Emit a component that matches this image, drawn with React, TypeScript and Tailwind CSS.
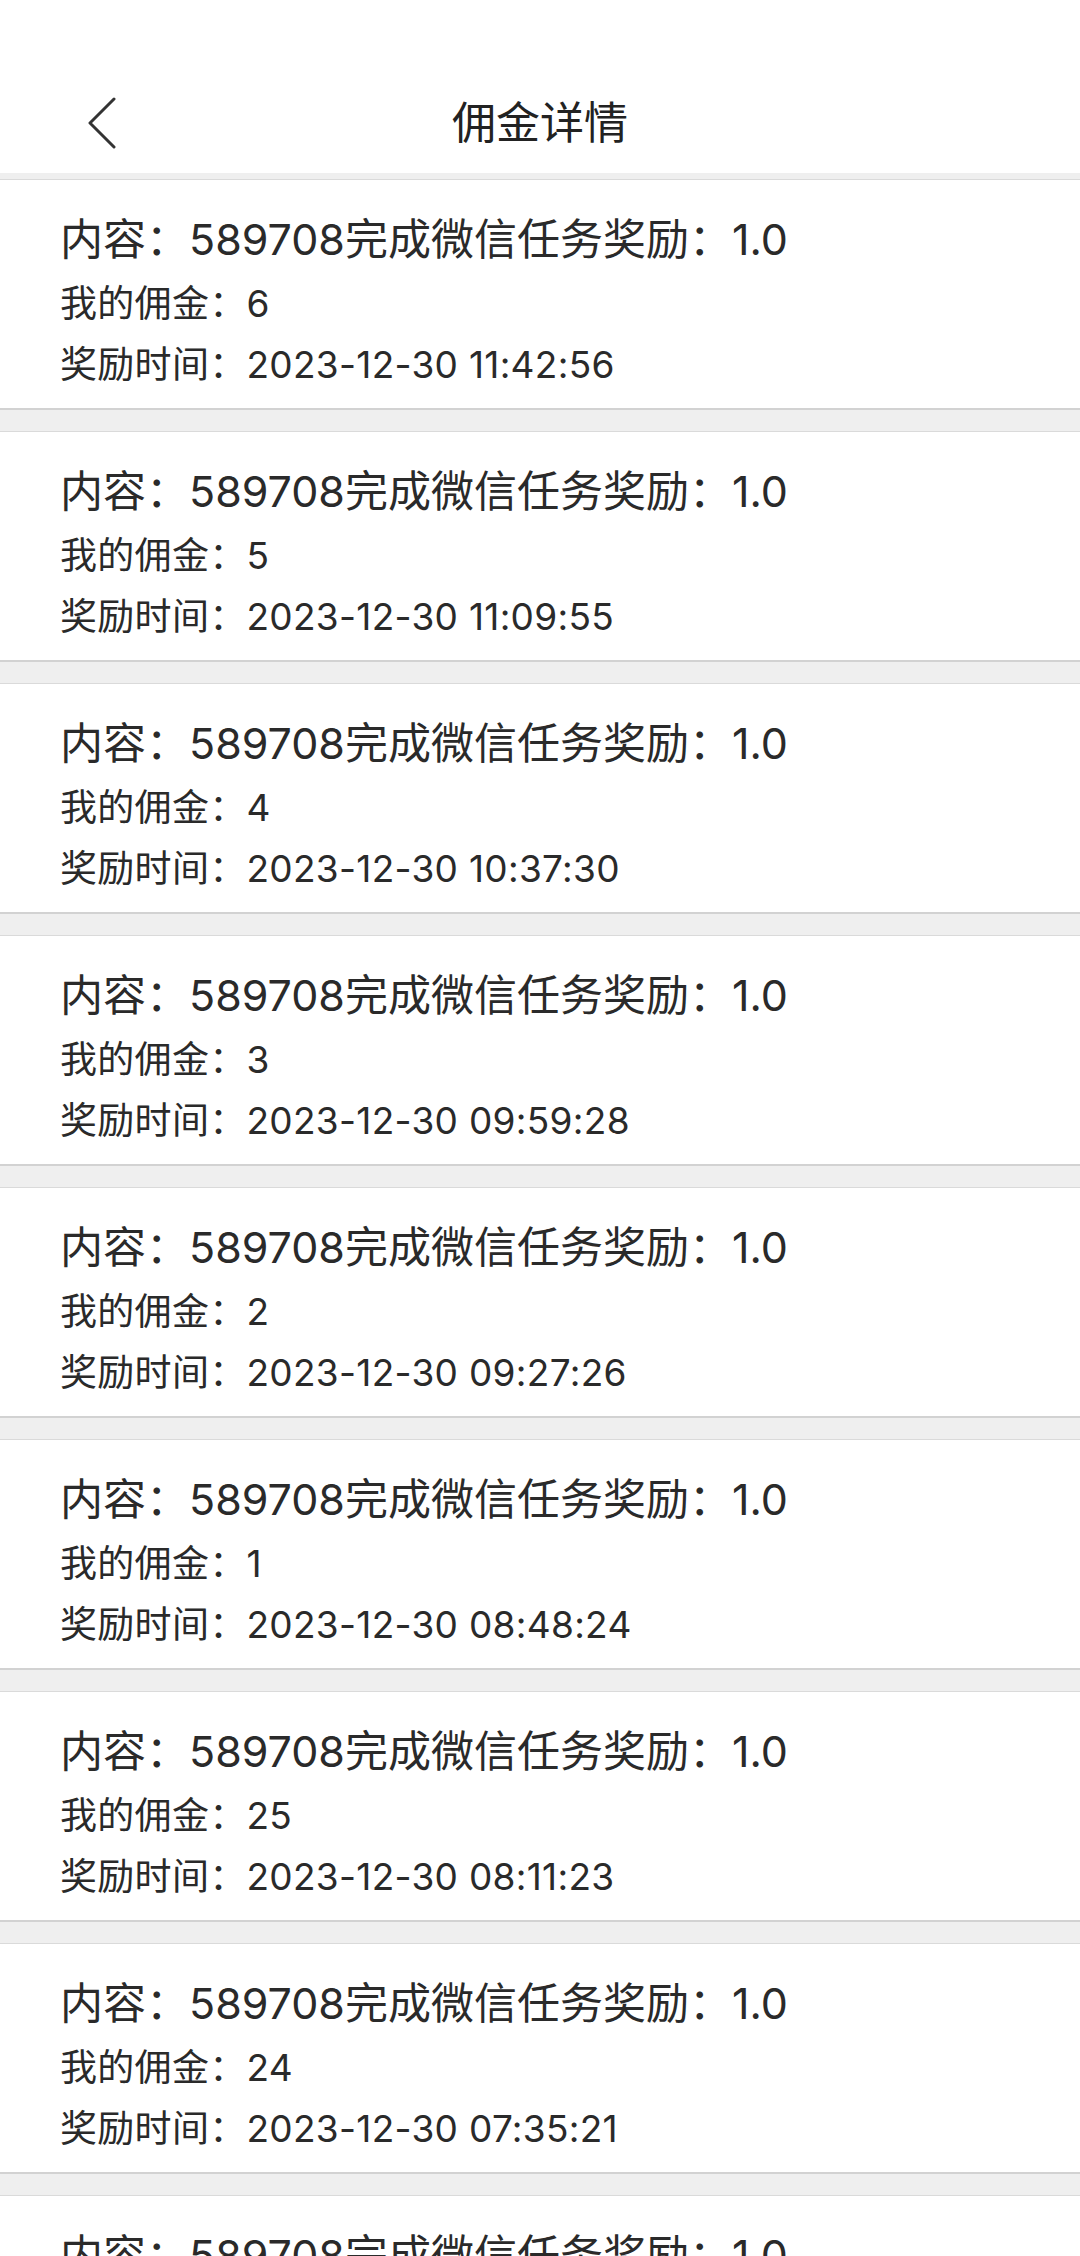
const records = [
  { amount: "6", time: "2023-12-30 11:42:56" },
  { amount: "5", time: "2023-12-30 11:09:55" },
  { amount: "4", time: "2023-12-30 10:37:30" },
  { amount: "3", time: "2023-12-30 09:59:28" },
  { amount: "2", time: "2023-12-30 09:27:26" },
  { amount: "1", time: "2023-12-30 08:48:24" },
  { amount: "25", time: "2023-12-30 08:11:23" },
  { amount: "24", time: "2023-12-30 07:35:21" },
  { amount: "23", time: "2023-12-30 07:02:19" },
];

function RecordCard({ amount, time }: { amount: string; time: string }) {
  return (
    <div className="bg-white border-t border-t-[#dadada] border-b-2 border-b-[#d2d2d2] pl-[60px] pt-[28px] pb-[14px] text-[#2a2a2a]">
      <p className="text-[43px] leading-[62px] mb-[3px]">内容：589708完成微信任务奖励：1.0</p>
      <p className="text-[37px] leading-[62px] tracking-[0.3px]">我的佣金：{amount}</p>
      <p className="text-[37px] leading-[59px] tracking-[0.3px]">奖励时间：{time}</p>
    </div>
  );
}

export default function App() {
  return (
    <div
      className="min-h-screen bg-[#efefef] overflow-hidden"
      style={{ fontFamily: 'Inter, "Noto Sans CJK SC", sans-serif' }}
    >
      {/* Header */}
      <div className="bg-white h-[173px] flex items-end pb-[24px] relative">
        <div className="w-full h-[52px] flex items-center justify-center relative">
          <button className="absolute left-[80px] top-0 h-[52px] w-[40px] flex items-center justify-center">
            <svg width="32" height="52" viewBox="0 0 32 52" fill="none">
              <path d="M30 2 L6 26 L30 50" stroke="#333" strokeWidth="3" strokeLinecap="round" strokeLinejoin="round" />
            </svg>
          </button>
          <h1 className="text-[44px] leading-[52px] text-[#222]">佣金详情</h1>
        </div>
      </div>

      {/* List */}
      <div className="flex flex-col gap-[21px] pt-[6px]">
        {records.map((r, i) => (
          <RecordCard key={i} amount={r.amount} time={r.time} />
        ))}
      </div>
    </div>
  );
}
